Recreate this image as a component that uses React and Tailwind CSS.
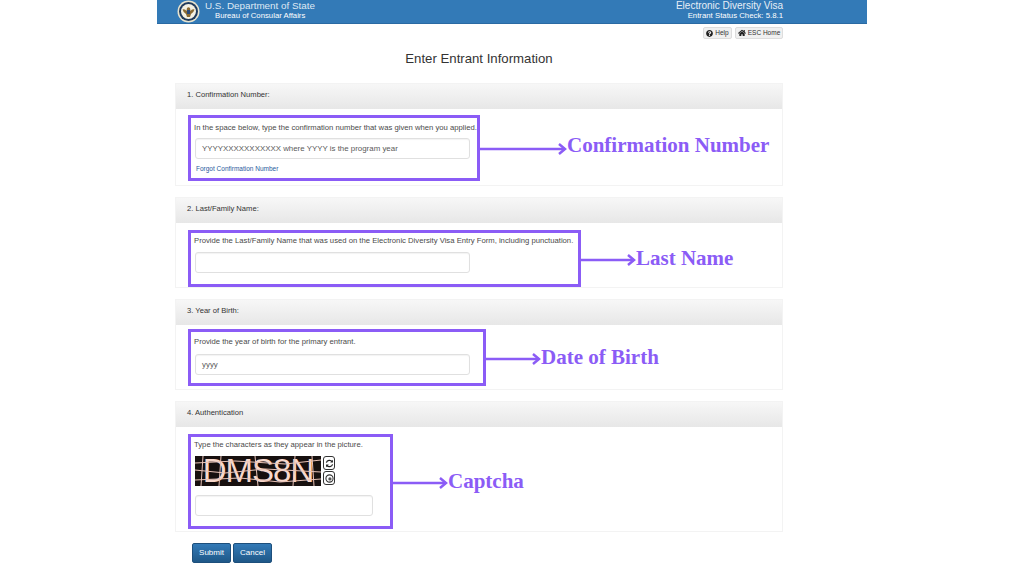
import { FaQuestionCircle, FaHome } from "react-icons/fa";

const sans = "font-['Liberation_Sans',Arial,sans-serif]";

function Seal() {
  return (
    <svg width="23" height="23" viewBox="0 0 23 23" className="shrink-0">
      <circle cx="11.5" cy="11.5" r="11" fill="#e8e4cf" />
      <circle cx="11.5" cy="11.5" r="9.5" fill="#1f3a5c" />
      <circle cx="11.5" cy="11.5" r="7.5" fill="#f3f0e2" />
      <path d="M5.5 9.5 Q8 8.5 9.5 11 L10 8 Q11.5 6.5 13 8 L13.5 11 Q15 8.5 17.5 9.5 Q16.5 13 14 14 L13 17 H10 L9 14 Q6.5 13 5.5 9.5 Z" fill="#8a6a32" />
      <rect x="10" y="10" width="3" height="4" fill="#2b4a78" />
    </svg>
  );
}

function Arrow({ width }) {
  return (
    <svg width={width} height="12" viewBox={`0 0 ${width} 12`} className="mt-[2px] shrink-0">
      <path d={`M0 6 H${width - 2}`} stroke="#8b5cf6" strokeWidth="2.5" />
      <path d={`M${width - 8} 1 L${width - 2} 6 L${width - 8} 11`} fill="none" stroke="#8b5cf6" strokeWidth="2.5" />
    </svg>
  );
}

function Field({ value, className = "w-[275px]" }) {
  return (
    <div className={`ml-[1px] flex h-[21px] ${className} items-center rounded-[3px] border border-[#e0e0e0] bg-white pl-[6px] text-[7.9px] text-[#5a5a5a] shadow-[inset_0_1px_1px_rgba(0,0,0,0.05)]`}>
      {value}
    </div>
  );
}

function Panel({ title, label, arrow, boxClass, bodyClass, labelClass = "", children }) {
  return (
    <section className={`w-[608px] border border-[#f3f3f3] bg-white ${sans}`}>
      <div className="flex h-[25px] items-center bg-gradient-to-b from-[#f7f7f7] to-[#e7e7e7] pb-[4px] pl-[11px] text-[7.6px] text-[#333]">
        {title}
      </div>
      <div className={`flex items-center pl-[12px] ${bodyClass}`}>
        <div className={`shrink-0 border-[3px] border-[#8b5cf6] pl-[3px] ${boxClass}`}>{children}</div>
        <Arrow width={arrow} />
        <span className={`whitespace-nowrap font-['Liberation_Serif',serif] text-[21px] font-bold leading-none text-[#8b5cf6] ${labelClass}`}>
          {label}
        </span>
      </div>
    </section>
  );
}

function Captcha() {
  return (
    <div className="ml-[1px] flex gap-[2px]">
      <div className="relative flex h-[30px] w-[126px] items-center justify-center bg-[#17100f] font-['Liberation_Sans',sans-serif] text-[33px] leading-[30px] tracking-[-1px] text-[#f8d8cc]">
        DMS8N
        <svg width="126" height="30" viewBox="0 0 126 30" className="absolute left-0 top-0">
          <g fill="none" stroke="#e9c4b8" strokeWidth="1">
            <path d="M0 7 L40 5 L90 8 L126 4" />
            <path d="M0 14 L30 17 L70 13 L126 16" />
            <path d="M0 24 L45 22 L85 26 L126 23" />
            <path d="M8 0 L6 30 M26 0 L24 30 M60 0 L63 30 M100 0 L98 30 M117 0 L119 30" />
          </g>
        </svg>
      </div>
      <div className="flex flex-col gap-[1px]">
        <div className="flex h-[14px] w-[12px] items-center justify-center rounded-[3px] border border-[#333]">
          <svg width="9" height="9" viewBox="0 0 10 10">
            <path d="M1.5 4 A3.7 3.7 0 0 1 8 3 M8.5 6 A3.7 3.7 0 0 1 2 7" fill="none" stroke="#222" strokeWidth="1.4" />
            <path d="M8.8 0.8 V4 H5.8 Z M1.2 9.2 V6 H4.2 Z" fill="#222" />
          </svg>
        </div>
        <div className="flex h-[14px] w-[12px] items-center justify-center rounded-[3px] border border-[#333]">
          <svg width="9" height="9" viewBox="0 0 10 10">
            <circle cx="5" cy="5" r="4" fill="none" stroke="#333" strokeWidth="1.2" />
            <circle cx="5.5" cy="5.5" r="1.8" fill="#555" />
          </svg>
        </div>
      </div>
    </div>
  );
}

export default function App() {
  return (
    <div className={`h-[576px] w-[1024px] overflow-hidden bg-white ${sans}`}>
      <div className="ml-[157px] w-[710px]">
        <header className="flex h-[24px] items-center border-b border-[#2a6aa3] bg-[#337ab7] pl-[20px] pr-[84px] text-white">
          <Seal />
          <div className="-mt-[2px] ml-[5px] flex flex-col">
            <span className="text-[9.85px] leading-[11px] text-[#dfe9f4]">U.S. Department of State</span>
            <span className="ml-[10px] text-[7.75px] leading-[10px]">Bureau of Consular Affairs</span>
          </div>
          <div className="-mt-[2px] ml-auto flex flex-col items-end">
            <span className="text-[10px] leading-[11px] text-[#e6eef6]">Electronic Diversity Visa</span>
            <span className="text-[7.8px] leading-[10px]">Entrant Status Check: 5.8.1</span>
          </div>
        </header>

        <div className="ml-[18px] w-[608px]">
          <div className="mt-[3px] flex justify-end gap-[3px] text-[6.5px] text-[#333]">
            <button className="flex h-[12px] w-[29px] items-center justify-center gap-[2px] rounded-[2px] border border-[#ddd] bg-[#f0f0f0]">
              <FaQuestionCircle className="text-[7px] text-[#222]" />
              Help
            </button>
            <button className="flex h-[12px] w-[48px] items-center justify-center gap-[2px] rounded-[2px] border border-[#ddd] bg-[#f0f0f0]">
              <FaHome className="text-[8px] text-[#222]" />
              ESC Home
            </button>
          </div>

          <h1 className="mb-[16px] mt-[12px] text-center text-[13.2px] leading-[16px] text-[#333]">Enter Entrant Information</h1>

          <div className="flex flex-col gap-[11px]">
            <Panel
              title="1. Confirmation Number:"
              label="Confirmation Number"
              arrow={87}
              boxClass="h-[66px] w-[292px]"
              bodyClass="h-[76px] pb-[4px] pt-[6px]"
              labelClass="-mt-[6px]"
            >
              <p className="mt-[4px] whitespace-nowrap text-[7.7px] leading-[12px] text-[#4a4a4a]">
                In the space below, type the confirmation number that was given when you applied.
              </p>
              <div className="mt-[4px]">
                <Field value="YYYYXXXXXXXXXXX where YYYY is the program year" />
              </div>
              <a className="ml-[2px] mt-[5px] block text-[6.5px] leading-[9px] text-[#2a5a9c]">Forgot Confirmation Number</a>
            </Panel>

            <Panel
              title="2. Last/Family Name:"
              label="Last Name"
              arrow={55}
              boxClass="h-[57px] w-[393px]"
              bodyClass="h-[64px] pt-[7px]"
            >
              <p className="mt-[2px] whitespace-nowrap text-[7.7px] leading-[12px] text-[#4a4a4a]">
                Provide the Last/Family Name that was used on the Electronic Diversity Visa Entry Form, including punctuation.
              </p>
              <div className="mt-[5px]">
                <Field />
              </div>
            </Panel>

            <Panel
              title="3. Year of Birth:"
              label="Date of Birth"
              arrow={55}
              boxClass="h-[57px] w-[298px]"
              bodyClass="h-[64px] pb-[3px] pt-[4px]"
            >
              <p className="mt-[4px] whitespace-nowrap text-[7.7px] leading-[12px] text-[#4a4a4a]">
                Provide the year of birth for the primary entrant.
              </p>
              <div className="mt-[6px]">
                <Field value="yyyy" />
              </div>
            </Panel>

            <Panel
              title="4. Authentication"
              label="Captcha"
              arrow={55}
              boxClass="h-[95px] w-[205px]"
              bodyClass="h-[104px] pb-[2px] pt-[7px]"
            >
              <p className="mt-[2px] whitespace-nowrap text-[7.7px] leading-[12px] text-[#4a4a4a]">
                Type the characters as they appear in the picture.
              </p>
              <div className="mt-[5px]">
                <Captcha />
              </div>
              <div className="mt-[9px]">
                <Field className="w-[178px]" />
              </div>
            </Panel>
          </div>

          <div className="ml-[17px] mt-[11px] flex gap-[2px] text-[8px] text-white">
            <button className="h-[20px] w-[39px] rounded-[2px] border border-[#1d4f7c] bg-gradient-to-b from-[#337ab7] to-[#1f5888]">Submit</button>
            <button className="h-[20px] w-[39px] rounded-[2px] border border-[#1d4f7c] bg-gradient-to-b from-[#337ab7] to-[#1f5888]">Cancel</button>
          </div>
        </div>
      </div>
    </div>
  );
}
